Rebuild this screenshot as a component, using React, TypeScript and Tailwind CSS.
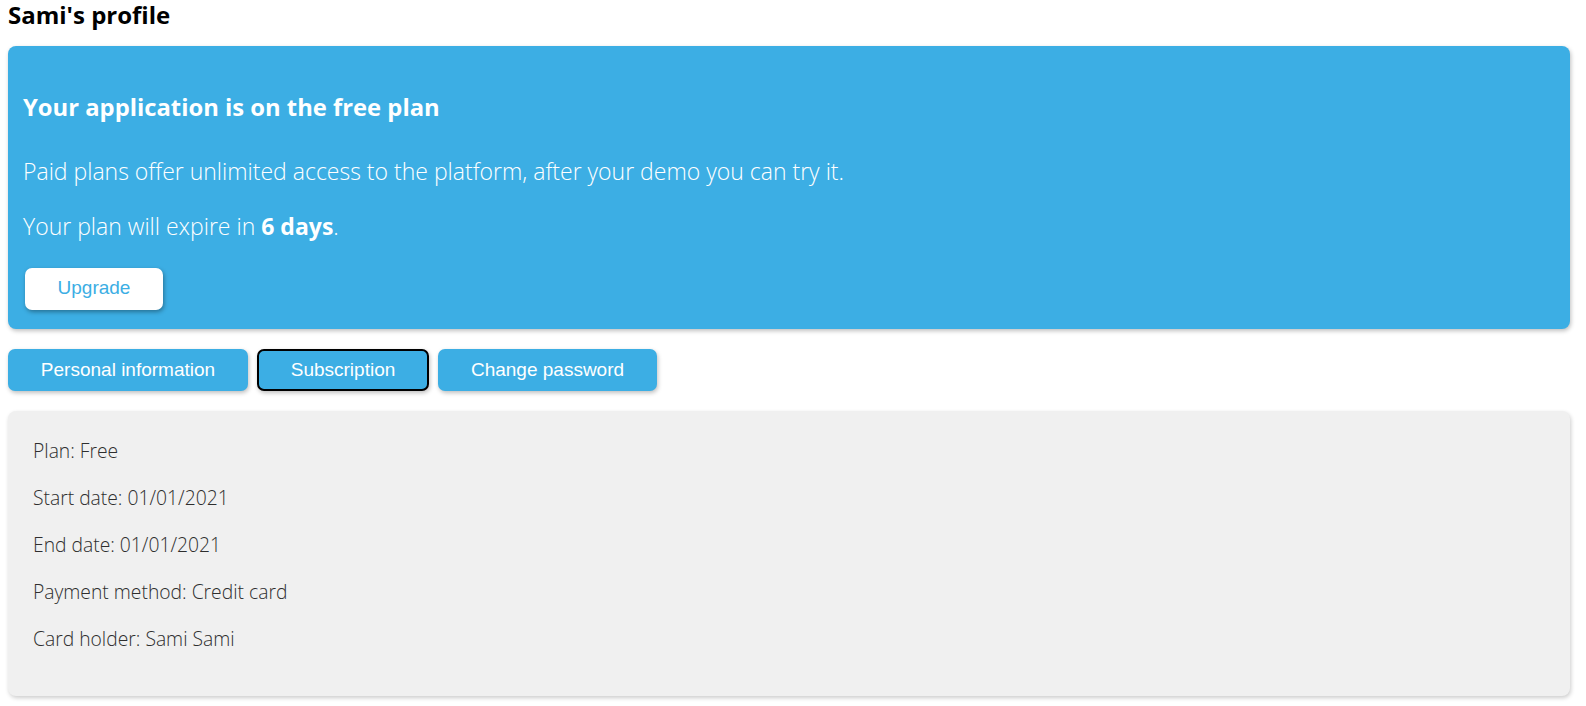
import React from "react";

const os = { fontFamily: '"Open Sans", "Liberation Sans", sans-serif' };

export default function App() {
  return (
    <div className="bg-white min-h-[706px] pl-2 pr-4" style={os}>
      <div className="text-[24px] leading-[30px] font-bold text-black">Sami's profile</div>

      <div className="mt-4 rounded-[8px] bg-[#3caee4] shadow-[1px_2px_4px_rgba(0,0,0,0.25)] pl-[15px] pt-[46px] pb-[19px] text-white">
        <div className="text-[23.8px] leading-[30px] font-bold">Your application is on the free plan</div>
        <div className="mt-[34px] text-[23px] leading-[30px] font-light">
          Paid plans offer unlimited access to the platform, after your demo you can try it.
        </div>
        <div className="mt-[25px] text-[23px] leading-[30px] font-light">
          Your plan will expire in <span className="font-bold">6 days</span>.
        </div>
        <div className="mt-[27px] pl-[2px]">
          <button
            className="w-[138px] h-[42px] pb-[2px] rounded-[7px] bg-white text-[#3caee4] text-[19px] shadow-[1px_2px_4px_rgba(0,0,0,0.35)]"
            style={{ fontFamily: '"Liberation Sans", Arial, sans-serif' }}
          >
            Upgrade
          </button>
        </div>
      </div>

      <div className="mt-5 flex gap-[9px]" style={{ fontFamily: '"Liberation Sans", Arial, sans-serif' }}>
        <button className="w-[240px] h-[42px] rounded-[7px] bg-[#3caee4] text-white text-[19px] shadow-[1px_2px_4px_rgba(0,0,0,0.25)]">
          Personal information
        </button>
        <button className="w-[172px] h-[42px] rounded-[7px] bg-[#3caee4] text-white text-[19px] border-2 border-black shadow-[1px_2px_4px_rgba(0,0,0,0.25)]">
          Subscription
        </button>
        <button className="w-[219px] h-[42px] rounded-[7px] bg-[#3caee4] text-white text-[19px] shadow-[1px_2px_4px_rgba(0,0,0,0.25)]">
          Change password
        </button>
      </div>

      <div className="mt-5 h-[285px] rounded-[8px] bg-[#f0f0f0] shadow-[1px_2px_4px_rgba(0,0,0,0.2)] pl-[25px] pt-[26px] flex flex-col gap-5 text-[19.3px] leading-[27px] font-light text-[#2e2e2e]">
        <div>Plan: Free</div>
        <div>Start date: 01/01/2021</div>
        <div>End date: 01/01/2021</div>
        <div>Payment method: Credit card</div>
        <div>Card holder: Sami Sami</div>
      </div>
    </div>
  );
}
